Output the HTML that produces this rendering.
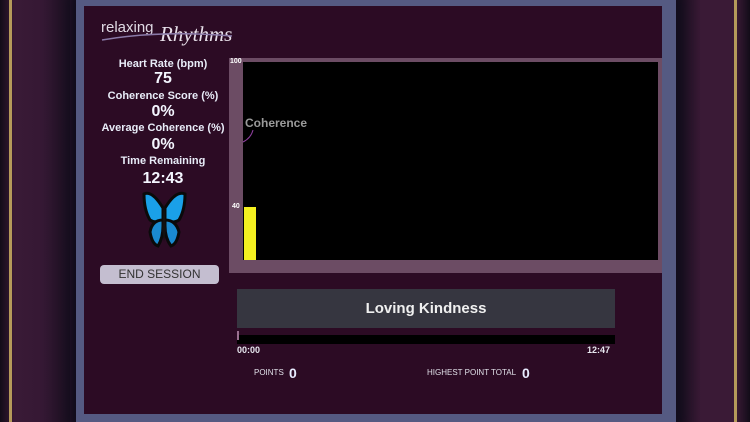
<!DOCTYPE html>
<html><head><meta charset="utf-8"><style>
*{margin:0;padding:0;box-sizing:border-box}
body{width:750px;height:422px;overflow:hidden;position:relative;font-family:"Liberation Sans",sans-serif;
background:linear-gradient(90deg,#0e0a16 0,#2a1630 1%,#3a1a36 4%,#2e1530 9%,#181222 10%,#181222 100%);}
.side{position:absolute;top:0;height:422px}
.gold{position:absolute;top:0;width:3px;height:422px;background:#b59a5a}
.border{position:absolute;left:76px;top:0;width:600px;height:422px;background:#555a82;box-shadow:0 0 12px 6px #120c1c}
.panel{position:absolute;left:84px;top:6px;width:578px;height:408px;background:#2c0b24}
.lbl{position:absolute;left:100px;width:126px;text-align:center;color:#e8ecf8;font-weight:bold;font-size:11px}
.val{position:absolute;left:100px;width:126px;text-align:center;color:#f4f6ff;font-weight:bold;font-size:16px}
</style></head><body>
<div class="side" style="left:0;width:70px;background:linear-gradient(90deg,#120c18,#3a1a36 20%,#351834 60%,#1a1020)"></div>
<div class="side" style="left:680px;width:70px;background:linear-gradient(90deg,#1a1020,#3a1a36 30%,#3a1a36 80%,#120c18)"></div>
<div class="gold" style="left:9px"></div>
<div class="gold" style="left:734px"></div>
<div class="border"></div>
<div class="panel"></div>
<div style="position:absolute;left:101px;top:19px;color:#e0dae4;font-size:15px">relaxing</div>
<div style="position:absolute;left:160px;top:22px;color:#e8e0ea;font-family:'Liberation Serif',serif;font-style:italic;font-size:21px">Rhythms</div>
<svg style="position:absolute;left:100px;top:30px" width="135" height="14"><path d="M2 10 Q60 0 132 6" stroke="#8a7aa8" stroke-width="1.5" fill="none"/></svg>
<div class="lbl" style="top:58px">Heart Rate (bpm)</div>
<div class="val" style="top:70px">75</div>
<div class="lbl" style="top:90px">Coherence Score (%)</div>
<div class="val" style="top:103px">0%</div>
<div class="lbl" style="top:122px">Average Coherence (%)</div>
<div class="val" style="top:136px">0%</div>
<div class="lbl" style="top:155px">Time Remaining</div>
<div class="val" style="top:170px">12:43</div>
<svg style="position:absolute;left:142px;top:190px" width="45" height="60" viewBox="0 0 45 60">
<path d="M21 18 Q10 0 2 4 Q2 20 8 30 Q14 34 21 30 Z" fill="#1aa0e8" stroke="#0a0a0a" stroke-width="3"/>
<path d="M23 18 Q34 0 43 4 Q43 20 37 30 Q31 34 23 30 Z" fill="#1aa0e8" stroke="#0a0a0a" stroke-width="3"/>
<path d="M21 30 Q10 30 8 42 Q10 54 16 56 Q21 48 21 36 Z" fill="#1a8ad0" stroke="#0a0a0a" stroke-width="3"/>
<path d="M23 30 Q34 30 37 42 Q35 54 29 56 Q23 48 23 36 Z" fill="#1a8ad0" stroke="#0a0a0a" stroke-width="3"/>
<path d="M22 12 L20 40 L22 52 L24 40 Z" fill="#111"/>
</svg>
<div style="position:absolute;left:100px;top:265px;width:119px;height:19px;background:#c4bed0;border-radius:4px;color:#333;font-size:12px;text-align:center;line-height:19px">END SESSION</div>
<div style="position:absolute;left:229px;top:58px;width:433px;height:215px;background:#6c4c64"></div>
<div style="position:absolute;left:243px;top:62px;width:415px;height:198px;background:#000"></div>
<div style="position:absolute;left:244px;top:207px;width:12px;height:53px;background:#f4f020"></div>
<div style="position:absolute;left:230px;top:58px;color:#fff;font-size:7px;font-weight:bold">100</div>
<div style="position:absolute;left:232px;top:203px;color:#fff;font-size:7px;font-weight:bold">40</div>
<div style="position:absolute;left:245px;top:116px;color:#9a9a9a;font-size:12px;font-weight:bold">Coherence</div>
<svg style="position:absolute;left:241px;top:128px" width="14" height="16"><path d="M12 2 Q10 10 2 14" stroke="#9040a0" stroke-width="1" fill="none"/></svg>
<div style="position:absolute;left:237px;top:289px;width:378px;height:39px;background:#363640;color:#f0f0f0;font-weight:bold;font-size:15px;text-align:center;line-height:39px">Loving Kindness</div>
<div style="position:absolute;left:237px;top:335px;width:378px;height:9px;background:#000"></div>
<div style="position:absolute;left:237px;top:331px;width:2px;height:9px;background:#9a7090"></div>
<div style="position:absolute;left:237px;top:345px;color:#e8e8f0;font-size:9px;font-weight:bold">00:00</div>
<div style="position:absolute;left:587px;top:345px;color:#e8e8f0;font-size:9px;font-weight:bold">12:47</div>
<div style="position:absolute;left:254px;top:368px;color:#e0e0e8;font-size:8px">POINTS</div>
<div style="position:absolute;left:289px;top:365px;color:#e8ecff;font-size:14px;font-weight:bold">0</div>
<div style="position:absolute;left:427px;top:368px;color:#e0e0e8;font-size:8px">HIGHEST POINT TOTAL</div>
<div style="position:absolute;left:522px;top:365px;color:#e8ecff;font-size:14px;font-weight:bold">0</div>
</body></html>
